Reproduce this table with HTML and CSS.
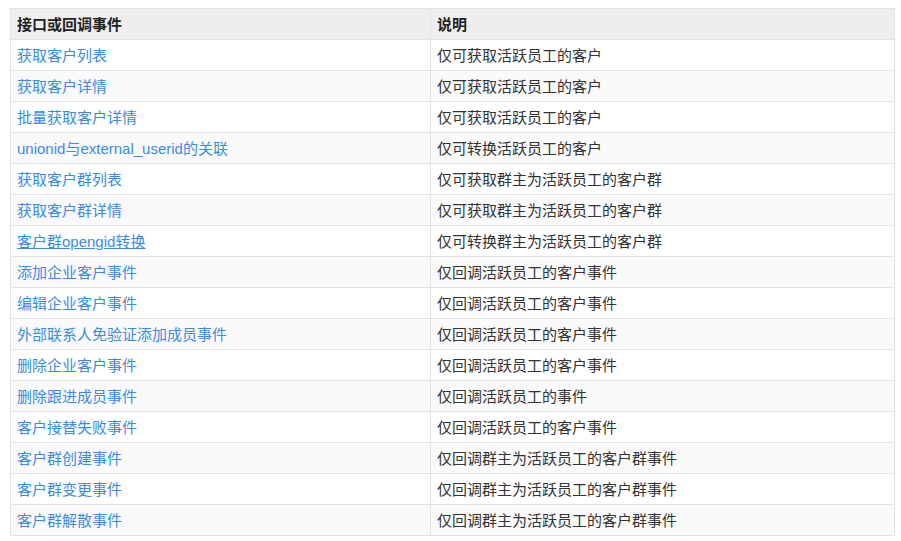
FILE: index.html
```html
<!DOCTYPE html>
<html lang="zh-CN">
<head>
<meta charset="utf-8">
<link rel="stylesheet" href="styles.css">
</head>
<body>
<div class="page">
<table class="api-table">
<thead>
<tr><th class="col-a">接口或回调事件</th><th>说明</th></tr>
</thead>
<tbody>
<tr><td><a href="#">获取客户列表</a></td><td>仅可获取活跃员工的客户</td></tr>
<tr><td><a href="#">获取客户详情</a></td><td>仅可获取活跃员工的客户</td></tr>
<tr><td><a href="#">批量获取客户详情</a></td><td>仅可获取活跃员工的客户</td></tr>
<tr><td><a href="#">unionid与external_userid的关联</a></td><td>仅可转换活跃员工的客户</td></tr>
<tr><td><a href="#">获取客户群列表</a></td><td>仅可获取群主为活跃员工的客户群</td></tr>
<tr><td><a href="#">获取客户群详情</a></td><td>仅可获取群主为活跃员工的客户群</td></tr>
<tr><td><a href="#" class="underline">客户群opengid转换</a></td><td>仅可转换群主为活跃员工的客户群</td></tr>
<tr><td><a href="#">添加企业客户事件</a></td><td>仅回调活跃员工的客户事件</td></tr>
<tr><td><a href="#">编辑企业客户事件</a></td><td>仅回调活跃员工的客户事件</td></tr>
<tr><td><a href="#">外部联系人免验证添加成员事件</a></td><td>仅回调活跃员工的客户事件</td></tr>
<tr><td><a href="#">删除企业客户事件</a></td><td>仅回调活跃员工的客户事件</td></tr>
<tr><td><a href="#">删除跟进成员事件</a></td><td>仅回调活跃员工的事件</td></tr>
<tr><td><a href="#">客户接替失败事件</a></td><td>仅回调活跃员工的客户事件</td></tr>
<tr><td><a href="#">客户群创建事件</a></td><td>仅回调群主为活跃员工的客户群事件</td></tr>
<tr><td><a href="#">客户群变更事件</a></td><td>仅回调群主为活跃员工的客户群事件</td></tr>
<tr><td><a href="#">客户群解散事件</a></td><td>仅回调群主为活跃员工的客户群事件</td></tr>
</tbody>
</table>
</div>
</body>
</html>
```
FILE: styles.css
```css
html, body {
  margin: 0;
  padding: 0;
  background: #ffffff;
}
.page {
  padding: 8px 0 0 10px;
  font-family: "Liberation Sans", "Noto Sans CJK SC", sans-serif;
  font-size: 15px;
  color: #333333;
}
.api-table {
  width: 885px;
  border-collapse: collapse;
  table-layout: fixed;
}
.api-table th,
.api-table td {
  border: 1px solid #dfe2e8;
  padding: 6px 6px 4px;
  height: 20px;
  line-height: 20px;
  text-align: left;
  vertical-align: middle;
  white-space: nowrap;
}
.api-table .col-a {
  width: 407px;
}
.api-table th {
  background: #eeeeee;
  font-weight: bold;
  color: #222222;
}
.api-table tbody tr:nth-child(even) td {
  background: #fafafa;
}
.api-table a {
  color: #3a8ae6;
  text-decoration: none;
}
.api-table a.underline {
  text-decoration: underline;
}
```
